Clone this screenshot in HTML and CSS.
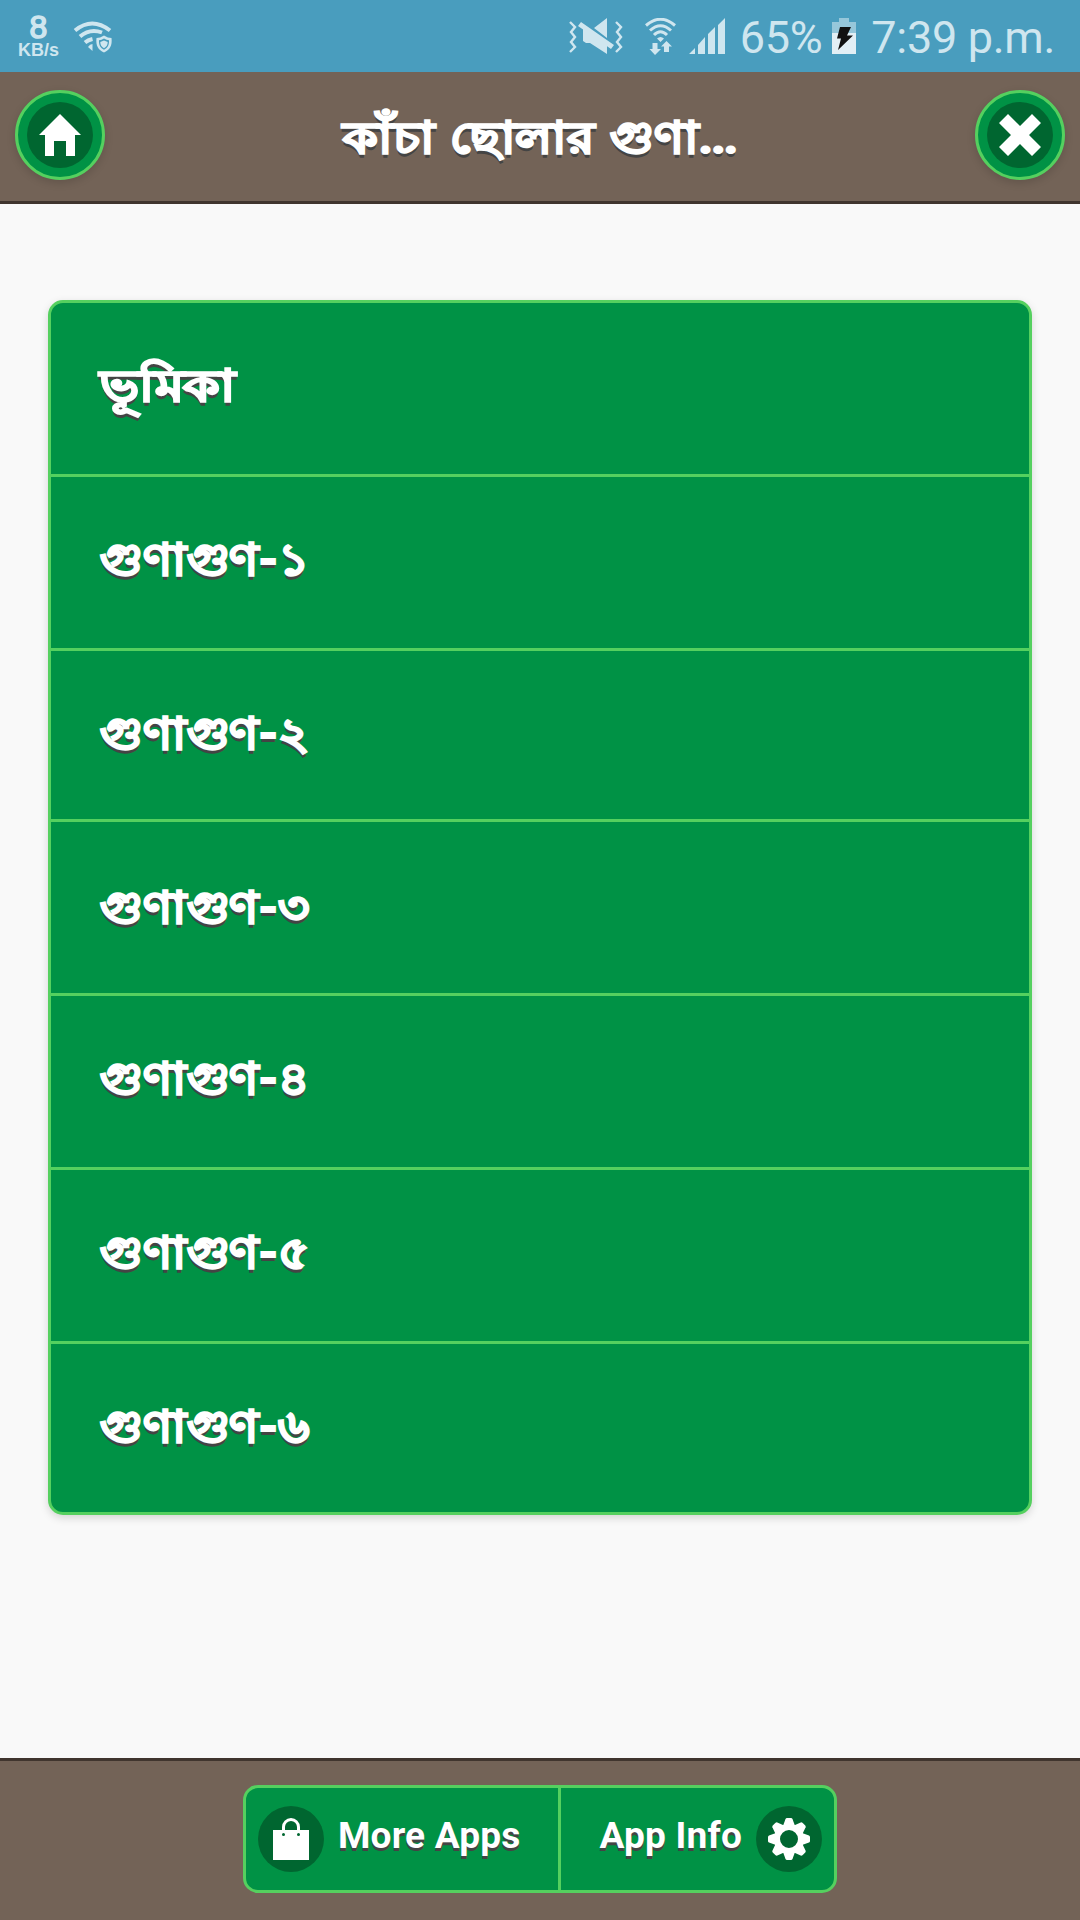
FILE: index.html
```
<!DOCTYPE html>
<html lang="bn">
<head>
  <meta charset="UTF-8">
  <title>কাঁচা ছোলার গুণাগুণ</title>
  <meta name="viewport" content="width=device-width, initial-scale=1.0">
  <link rel="stylesheet" href="styles.css">
</head>
<body>
  <div class="statusbar">
    <div class="speed"><b>8</b><span>KB/s</span></div>
    <svg class="wifi-safe" width="40" height="34" viewBox="0 0 40 34">
      <g fill="none" stroke="#cfe6ef" stroke-width="4">
        <path d="M2 10.500Q19 -3.500 37 10.500"/>
        <path d="M7 16.500Q17 8 29 12.500"/>
        <path d="M12 22.500Q15 20 19.500 19"/>
      </g>
      <path fill="#cfe6ef" d="M15 27q2-3 4.500-3v7z"/>
      <path fill="#cfe6ef" fill-rule="evenodd" d="M31 15.500q4 2.500 7.500 2.500c1 8-2 12-7.500 14.500-5.500-2.500-8.500-6.500-7.500-14.500q3.500 0 7.500-2.500zM31 18.500q-2.500 1.500-5 1.800c-.3 5 1.500 7.500 5 9.500 3.500-2 5.300-4.500 5-9.500q-2.500-.3-5-1.800zM31 20.500l3.700 1.600c0 3-1.200 4.700-3.700 6.200-2.500-1.500-3.700-3.200-3.700-6.200z"/>
    </svg>
    <div class="status-right">
      <svg class="mute" width="54" height="38" viewBox="0 0 54 38">
        <g fill="none" stroke="#cfe6ef" stroke-width="2.400">
          <path d="M1 4l5 5-4 5 4 5-4 5 4 5-5 5"/>
          <path d="M47 4l5 5-4 5 4 5-4 5 4 5-5 5"/>
        </g>
        <path fill="#cfe6ef" d="M38 0v20L25 10zM12 4l33 23-3 4L9 8zM14 11l24 17v8L21 25h-4l-3-2z"/>
      </svg>
      <svg class="wifi" width="32" height="38" viewBox="0 0 32 38">
        <g fill="none" stroke="#cfe6ef" stroke-width="3">
          <path d="M1 7.500Q15.500 -5 30 7.500"/>
          <path d="M5 12.500Q15.500 3 26 12.500"/>
          <path d="M9 17Q15.500 10.500 22 17"/>
        </g>
        <path fill="#cfe6ef" d="M12 20.500q3.500-3 7 0l-3.500 3.500zM7.500 25h5v6H16l-6 6-5.500-6h3zM21.500 23l5.500 5.500h-3V34h-5v-5.500h-3z"/>
      </svg>
      <svg class="signal" width="36" height="38" viewBox="0 0 36 38">
        <path fill="#cfe6ef" d="M0 36l6-6v6zM9 36V27l7-8v17zM19 36V16l7-7v27zM29 36V7l7-7v36z"/>
      </svg>
      <span class="percent">65%</span>
      <svg class="battery" width="24" height="38" viewBox="0 0 24 38">
        <path fill="#96c7da" d="M0 4h7V0h10v4h7v11H0z"/>
        <path fill="#e2eff5" d="M0 15h24v21H0z"/>
        <path fill="#111" d="M8 9h11l-4 8.500h6L6 32l3-11.500H5z"/>
      </svg>
      <span class="clock">7:39 p.m.</span>
    </div>
  </div>

  <header class="header">
    <a class="round-btn" href="#">
      <span class="disc"><svg width="42" height="42" viewBox="0 0 14 14"><polygon points="7,0 0,7 2,7 2,14 5,14 5,9 9,9 9,14 12,14 12,7 14,7"/></svg></span>
    </a>
    <h1>কাঁচা ছোলার গুণা<span class="dots">...</span></h1>
    <a class="round-btn" href="#">
      <span class="disc"><svg width="42" height="42" viewBox="0 0 14 14"><polygon points="14,3 11,0 7,4 3,0 0,3 4,7 0,11 3,14 7,10 11,14 14,11 10,7"/></svg></span>
    </a>
  </header>

  <main class="content">
    <ul class="list">
      <li><a class="wide" href="#">ভূমিকা</a></li>
      <li><a href="#">গুণাগুণ-১</a></li>
      <li><a href="#">গুণাগুণ-২</a></li>
      <li><a href="#">গুণাগুণ-৩</a></li>
      <li><a href="#">গুণাগুণ-৪</a></li>
      <li><a href="#">গুণাগুণ-৫</a></li>
      <li><a href="#">গুণাগুণ-৬</a></li>
    </ul>
  </main>

  <footer class="footer">
    <div class="btn-group">
      <a class="more" href="#">
        <span class="disc">
          <svg width="42" height="42" viewBox="0 0 42 42">
            <path fill-rule="evenodd" d="M3 12h36v30H3zM12 16.500a1.500 1.500 0 1 0 3 0 1.500 1.500 0 1 0-3 0zM27 16.500a1.500 1.500 0 1 0 3 0 1.500 1.500 0 1 0-3 0z"/>
            <path class="handle" d="M13.500 13V9a7.500 7.500 0 0 1 15 0v4"/>
          </svg>
        </span>
        <span class="label">More Apps</span>
      </a>
      <a class="info" href="#">
        <span class="label">App Info</span>
        <span class="disc">
          <svg width="42" height="42" viewBox="-21 -21 42 42">
            <defs><path id="tooth" d="M-6-13L-3.500-20Q-3-21-2-21H2Q3-21 3.500-20L6-13z"/></defs>
            <circle class="ring" r="12"/>
            <use href="#tooth"/>
            <use href="#tooth" transform="rotate(45)"/>
            <use href="#tooth" transform="rotate(90)"/>
            <use href="#tooth" transform="rotate(135)"/>
            <use href="#tooth" transform="rotate(180)"/>
            <use href="#tooth" transform="rotate(225)"/>
            <use href="#tooth" transform="rotate(270)"/>
            <use href="#tooth" transform="rotate(315)"/>
          </svg>
        </span>
      </a>
    </div>
  </footer>
</body>
</html>
```
FILE: styles.css
```
:root {
  --green: #009245;
  --line: #55d05f;
  --disc: #006630;
  --brown: #736357;
  --brown-dark: #40352e;
  --status: #cfe6ef;
}

* {
  box-sizing: border-box;
  margin: 0;
  padding: 0;
}

body {
  background: #f9f9f9;
  font-family: Roboto, "Noto Sans", sans-serif;
  height: 1920px;
  display: flex;
  flex-direction: column;
  overflow: hidden;
}

a {
  color: #fff;
  text-decoration: none;
}

svg {
  display: block;
}

/* status bar */
.statusbar {
  height: 72px;
  background: #499dbe;
  color: var(--status);
  display: flex;
  align-items: flex-start;
  padding-left: 17px;
}

.speed {
  width: 43px;
  padding-top: 13px;
  text-align: center;
  font-family: "Liberation Sans", sans-serif;
}

.speed b {
  display: block;
  font-size: 32px;
  line-height: 29px;
  font-weight: normal;
  -webkit-text-stroke: 1.5px var(--status);
}

.speed span {
  display: block;
  font-size: 18px;
  line-height: 17px;
  font-weight: bold;
}

.wifi-safe {
  margin: 20px 0 0 13px;
}

.status-right {
  display: flex;
  align-items: flex-start;
  margin-left: auto;
  padding: 18px 25px 0 0;
}

.wifi {
  margin-left: 22px;
}

.signal {
  margin-left: 12px;
}

.percent,
.clock {
  font-size: 45px;
  line-height: 40px;
  letter-spacing: -0.3px;
  white-space: nowrap;
}

.percent {
  margin-left: 15px;
}

.battery {
  margin-left: 10px;
}

.clock {
  margin-left: 15px;
}

/* header */
.header {
  height: 132px;
  background: var(--brown);
  border-bottom: 3px solid var(--brown-dark);
  display: flex;
  justify-content: space-between;
  padding: 18px 15px;
}

.header h1 {
  color: #fff;
  font-size: 44px;
  line-height: 64px;
  padding-top: 16px;
  text-shadow: 0 4px 0 #444;
  -webkit-text-stroke: 2px #fff;
  word-spacing: 3px;
  transform: scaleX(1.125);
}

.header .dots {
  letter-spacing: -1.5px;
}

.round-btn {
  width: 90px;
  height: 90px;
  border: 3px solid var(--line);
  border-radius: 50%;
  background: var(--green);
  box-shadow: 0 3px 9px rgba(0, 0, 0, 0.15);
  display: flex;
  align-items: center;
  justify-content: center;
}

.disc {
  width: 66px;
  height: 66px;
  flex: none;
  border-radius: 50%;
  background: var(--disc);
  display: flex;
  align-items: center;
  justify-content: center;
}

.disc svg {
  fill: #fff;
}

.disc .handle {
  fill: none;
  stroke: #fff;
  stroke-width: 3;
}

.disc .ring {
  fill: none;
  stroke: #fff;
  stroke-width: 6;
}

/* chapter list */
.content {
  flex: 1;
  padding: 96px 48px 0;
}

.list {
  height: 1215px;
  list-style: none;
  background: var(--green);
  border: 3px solid var(--line);
  border-radius: 15px;
  box-shadow: 0 3px 9px rgba(0, 0, 0, 0.15);
}

.list li {
  display: flex;
  align-items: flex-start;
  height: 174px;
  padding: 51px 49px 0;
  border-bottom: 3px solid var(--line);
}

.list li:nth-child(3) {
  height: 171px;
}

.list li:nth-child(4) {
  padding-top: 54px;
}

.list li:last-child {
  height: 168px;
  border-bottom: none;
}

.list a {
  font-size: 44px;
  line-height: 64px;
  font-weight: bold;
  text-shadow: 0 4px 0 #444;
  -webkit-text-stroke: 2px #fff;
  transform: scaleX(1.095);
  transform-origin: left;
}

.list .wide {
  transform: scaleX(1.19);
}

/* bottom bar */
.footer {
  height: 162px;
  background: var(--brown);
  border-top: 3px solid var(--brown-dark);
  display: flex;
  justify-content: center;
  padding-top: 24px;
}

.btn-group {
  width: 594px;
  height: 108px;
  background: var(--green);
  border: 3px solid var(--line);
  border-radius: 15px;
  display: flex;
}

.btn-group a {
  display: flex;
  align-items: center;
  gap: 14px;
  font-size: 37px;
  font-weight: bold;
  letter-spacing: 0.2px;
  text-shadow: 0 3px 0 #444;
}

.btn-group .label {
  padding-bottom: 8px;
}

.btn-group .more {
  width: 315px;
  padding-left: 12px;
  border-right: 3px solid var(--line);
}

.btn-group .info {
  flex: 1;
  justify-content: flex-end;
  padding-right: 12px;
}
```
